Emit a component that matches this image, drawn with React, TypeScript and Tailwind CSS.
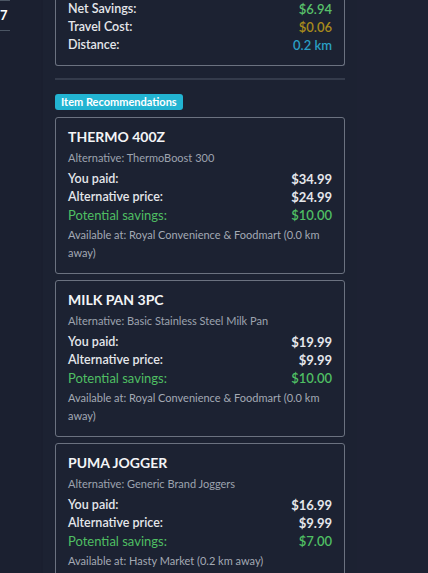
import React from 'react';

type Rec = {
  name: string;
  alt: string;
  paid: string;
  altPrice: string;
  savings: string;
  store: string;
};

const recs: Rec[] = [
  {
    name: 'THERMO 400Z',
    alt: 'ThermoBoost 300',
    paid: '$34.99',
    altPrice: '$24.99',
    savings: '$10.00',
    store: 'Royal Convenience & Foodmart (0.0 km away)',
  },
  {
    name: 'MILK PAN 3PC',
    alt: 'Basic Stainless Steel Milk Pan',
    paid: '$19.99',
    altPrice: '$9.99',
    savings: '$10.00',
    store: 'Royal Convenience & Foodmart (0.0 km away)',
  },
  {
    name: 'PUMA JOGGER',
    alt: 'Generic Brand Joggers',
    paid: '$16.99',
    altPrice: '$9.99',
    savings: '$7.00',
    store: 'Hasty Market (0.2 km away)',
  },
];

function Row({ label, value, valueClass, labelClass }: { label: string; value: string; valueClass?: string; labelClass?: string }) {
  return (
    <div className="flex justify-between items-center h-[18px] leading-[18px]">
      <span className={labelClass ?? 'text-[12.5px] font-semibold text-gray-200'}>{label}</span>
      <span className={valueClass ?? 'text-[13px] font-bold text-gray-200'}>{value}</span>
    </div>
  );
}

function RecCard({ rec }: { rec: Rec }) {
  return (
    <div className="border border-[#6b7280] rounded-[3px] px-3 pt-[10px] pb-[11px]">
      <h3 className="text-[14px] leading-[18px] font-bold text-gray-100 mb-[3px]">{rec.name}</h3>
      <p className="text-[11px] leading-[18px] text-[#9ca3af] mb-[3px]">Alternative: {rec.alt}</p>
      <Row label="You paid:" value={rec.paid} />
      <Row label="Alternative price:" value={rec.altPrice} />
      <Row
        label="Potential savings:"
        value={rec.savings}
        labelClass="text-[13px] font-normal text-[#4fbf63]"
        valueClass="text-[13px] font-semibold text-[#4fbf63]"
      />
      <p className="mt-[2px] text-[11px] leading-[18px] text-[#a3a9b4]">Available at: {rec.store}</p>
    </div>
  );
}

export default function App() {
  return (
    <div className="h-[573px] w-[428px] overflow-hidden bg-[#1b2030] flex text-gray-200" style={{ fontFamily: 'Lato, "Open Sans", sans-serif' }}>
      {/* cut-off left panel */}
      <div className="w-[43px] shrink-0">
        <div className="w-[10px] border-t border-b border-[#4b5563] h-[31px] flex items-center">
          <span className="text-[13px] font-bold text-white leading-none">7</span>
        </div>
      </div>

      {/* main column */}
      <div className="w-[314px] shrink-0 bg-[#1c2232] px-3 shadow-[2px_0_4px_rgba(0,0,0,0.15)]">
        <div className="border border-t-0 border-[#6b7280] rounded-b-[3px] px-3 pb-[11px]">
          <Row label="Net Savings:" value="$6.94" valueClass="text-[13px] font-semibold text-[#58c06a]" />
          <Row label="Travel Cost:" value="$0.06" valueClass="text-[13px] font-semibold text-[#a88b1c]" />
          <Row label="Distance:" value="0.2 km" valueClass="text-[13px] font-semibold text-[#2a9fc4]" />
        </div>

        <div className="mt-3 h-[2px] bg-[#343b4b]" />

        <div className="mt-[14px] flex">
          <span className="bg-[#22b4d2] text-white text-[11px] font-bold leading-[16px] px-[6px] rounded-[3px]">
            Item Recommendations
          </span>
        </div>

        <div className="mt-[7px] flex flex-col gap-[6px]">
          {recs.map((r) => (
            <RecCard key={r.name} rec={r} />
          ))}
        </div>
      </div>

      <div className="flex-1 bg-[#1d2233]" />
    </div>
  );
}
